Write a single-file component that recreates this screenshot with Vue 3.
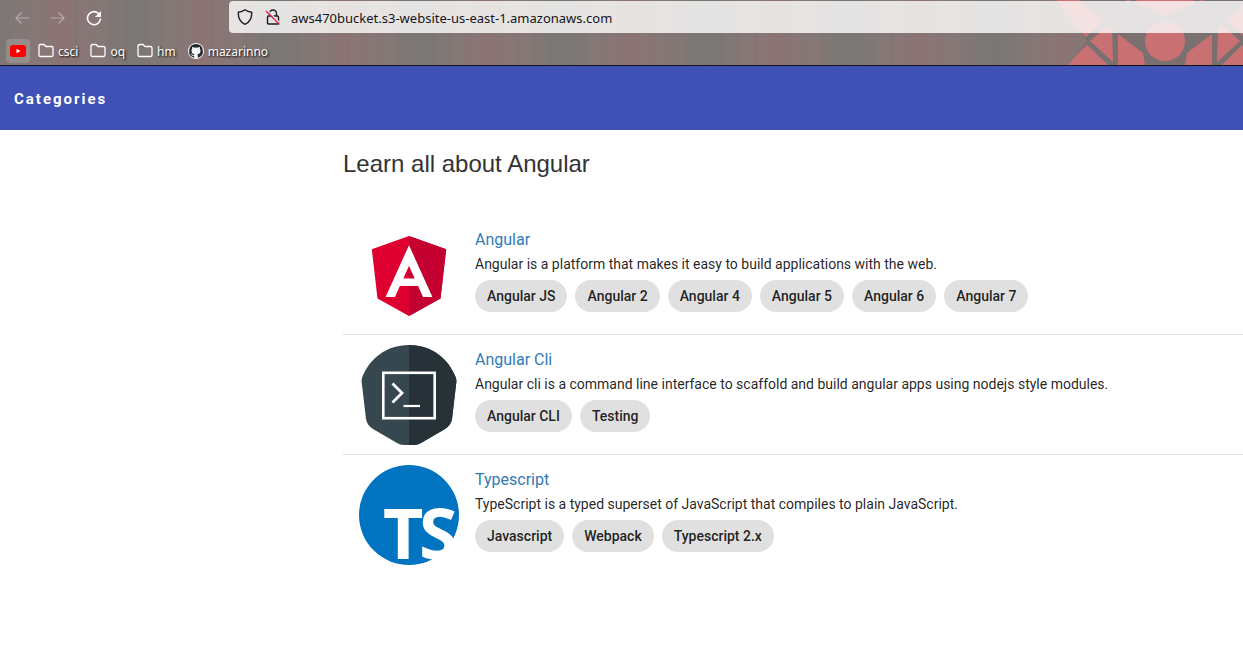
<script setup>
const folders = ['csci', 'oq', 'hm']
const courses = [
  {
    id: 'angular',
    title: 'Angular',
    text: 'Angular is a platform that makes it easy to build applications with the web.',
    tags: ['Angular JS', 'Angular 2', 'Angular 4', 'Angular 5', 'Angular 6', 'Angular 7'],
  },
  {
    id: 'cli',
    title: 'Angular Cli',
    text: 'Angular cli is a command line interface to scaffold and build angular apps using nodejs style modules.',
    tags: ['Angular CLI', 'Testing'],
  },
  {
    id: 'typescript',
    title: 'Typescript',
    text: 'TypeScript is a typed superset of JavaScript that compiles to plain JavaScript.',
    tags: ['Javascript', 'Webpack', 'Typescript 2.x'],
  },
]
</script>

<template>
  <div class="window">
    <header class="chrome">
      <svg class="art" width="213" height="65" viewBox="0 0 213 65" aria-hidden="true">
        <path class="art-shade" d="M27 0H213V65H38L57 41Z" />
        <g class="art-red">
          <path d="M27 0H49L73 21L56 37Q39 20 27 0Z" />
          <path d="M96 0H101L98 2ZM169 0H174L172 2Z" />
          <path d="M106 0H164V4L135 16L108 4Z" />
          <circle cx="135" cy="41" r="20" />
          <path d="M38 65Q48 53 57 45L78 65Z" />
          <path d="M60 41L78 25L82 28L83 62Z" />
          <path d="M88 34L113 53L115 65H88Z" />
          <path d="M182 34L157 53L155 65H182Z" />
          <path d="M210 41L192 25L188 28L187 62Z" />
          <path d="M192 65L212 45L213 46V65Z" />
          <path d="M213 5L197 21L213 36Z" />
        </g>
      </svg>

      <div class="toolbar">
        <nav class="nav-buttons" aria-label="History">
          <button class="nav-button dim" type="button" aria-label="Back">
            <svg width="16" height="16" viewBox="0 0 16 16"><path d="M15 8H2M7.500 2.500L2 8L7.500 13.500" /></svg>
          </button>
          <button class="nav-button dim" type="button" aria-label="Forward">
            <svg width="16" height="16" viewBox="0 0 16 16"><path d="M1 8H14M8.500 2.500L14 8L8.500 13.500" /></svg>
          </button>
          <button class="nav-button" type="button" aria-label="Reload">
            <svg width="16" height="16" viewBox="0 0 16 16">
              <path class="reload-arc" d="M13 4A6.500 6.500 0 1 0 14.500 8.500" />
              <path class="solid" d="M15 1V7H9Z" />
            </svg>
          </button>
        </nav>
        <div class="address">
          <svg width="16" height="16" viewBox="0 0 16 16" aria-hidden="true">
            <path d="M8 0.800C10 2.300 12 3 14.600 3.200C15.200 8.500 12.500 13.500 8 15.300C3.500 13.500 0.800 8.500 1.400 3.200C4 3 6 2.300 8 0.800Z" />
          </svg>
          <svg width="16" height="16" viewBox="0 0 16 16" aria-hidden="true">
            <path d="M4.500 7V4.500A3.500 3.500 0 0 1 11.500 4.500V7M3.500 7H12.500Q13.500 7 13.500 8V14Q13.500 15 12.500 15H3.500Q2.500 15 2.500 14V8Q2.500 7 3.500 7Z" />
            <path class="slash-gap" d="M2 1L15.500 14.500" />
            <path class="slash" d="M1 2L14.500 15.500" />
          </svg>
          <input class="url" type="text" aria-label="Address" value="aws470bucket.s3-website-us-east-1.amazonaws.com" />
        </div>
      </div>

      <nav class="bookmarks" aria-label="Bookmarks">
        <a class="youtube" href="#" aria-label="YouTube">
          <svg width="16" height="12" viewBox="0 0 16 12">
            <rect width="16" height="12" rx="3" fill="#ff0000" />
            <path d="M6.500 3.700L10.500 6L6.500 8.300Z" fill="#fff" />
          </svg>
        </a>
        <a v-for="name in folders" :key="name" class="bookmark" href="#">
          <svg width="16" height="16" viewBox="0 0 16 16" aria-hidden="true">
            <path d="M1 3.500Q1 1.500 2.500 1.500H6L8 3.500H13.500Q15 3.500 15 5V12Q15 13.500 13.500 13.500H2.500Q1 13.500 1 12Z" />
          </svg>
          <span>{{ name }}</span>
        </a>
        <a class="bookmark" href="#">
          <svg class="github" width="16" height="16" viewBox="0 0 16 16" aria-hidden="true">
            <circle cx="8" cy="8" r="8" fill="#f6f6f8" />
            <path d="M8 1.100A7 7 0 0 0 5.800 14.700C6.100 14.800 6.200 14.600 6.200 14.400V13.100C4.300 13.500 3.900 12.200 3.900 12.200C3.500 11.400 3.100 11.200 3.100 11.200C2.500 10.800 3.200 10.800 3.200 10.800C3.900 10.800 4.200 11.500 4.200 11.500C4.900 12.600 5.900 12.300 6.300 12.100C6.300 11.700 6.500 11.300 6.700 11.200C5.200 11 3.500 10.400 3.500 7.700C3.500 6.900 3.800 6.300 4.200 5.800C4.200 5.600 3.900 4.900 4.300 4C4.300 4 4.900 3.800 6.200 4.700A6.700 6.700 0 0 1 9.800 4.700C11.100 3.800 11.700 4 11.700 4C12.100 4.900 11.800 5.600 11.800 5.800C12.200 6.300 12.500 6.900 12.500 7.700C12.500 10.400 10.800 11 9.300 11.200C9.600 11.400 9.800 11.900 9.800 12.400V14.400C9.800 14.600 9.900 14.800 10.200 14.700A7 7 0 0 0 8 1.100Z" fill="#24292e" />
          </svg>
          <span>mazarinno</span>
        </a>
      </nav>
    </header>

    <div class="app-bar"><a href="#">Categories</a></div>

    <main class="content">
      <h1>Learn all about Angular</h1>
      <ul class="courses">
        <li v-for="course in courses" :key="course.id" class="course">
          <svg v-if="course.id === 'angular'" width="100" height="100" viewBox="0 -1 100 100" aria-hidden="true">
            <clipPath id="mark-area"><rect x="20" y="18" width="60" height="53" /></clipPath>
            <path d="M50 10L12.800 23.300L18.500 72.500L50 90L81.500 72.500L87.200 23.300Z" fill="#dd0031" />
            <path d="M50 10V90L81.500 72.500L87.200 23.300Z" fill="#c3002f" />
            <g fill="none" stroke="#fff">
              <path d="M27.200 80L50 29.500L72.800 80" stroke-width="8.500" stroke-miterlimit="8" clip-path="url(#mark-area)" />
              <path d="M39 56.200H61" stroke-width="7.500" />
            </g>
          </svg>
          <svg v-else-if="course.id === 'cli'" width="100" height="100" viewBox="0 0 100 100" aria-hidden="true">
            <path d="M50 0C27 0 10 14 3 33Q2 36 3 40L7 74Q8 80 14 84L38 98Q41 100 45 100H55Q59 100 62 98L86 84Q92 80 93 74L97 40Q98 36 97 33C90 14 73 0 50 0Z" fill="#37474f" />
            <path d="M50 0V100H55Q59 100 62 98L86 84Q92 80 93 74L97 40Q98 36 97 33C90 14 73 0 50 0Z" fill="#263238" />
            <g fill="none" stroke="#fff">
              <rect x="24.300" y="27.800" width="51.400" height="45.400" stroke-width="2.600" />
              <path d="M33.500 38.500L43 48L33.500 57.500" stroke-width="2.800" />
              <path d="M44.500 61H61" stroke-width="2.200" />
            </g>
          </svg>
          <svg v-else width="100" height="100" viewBox="0 0 100 100" role="img" aria-label="TypeScript logo">
            <circle cx="50" cy="50" r="50" fill="#0074c1" />
            <g class="ts-mark">
              <text x="24" y="94">T</text>
              <text x="60" y="94">S</text>
            </g>
          </svg>

          <div class="details">
            <h2><a href="#">{{ course.title }}</a></h2>
            <p>{{ course.text }}</p>
            <div class="tags">
              <span v-for="tag in course.tags" :key="tag" class="tag">{{ tag }}</span>
            </div>
          </div>
        </li>
      </ul>
    </main>
  </div>
</template>

<style>
body {
  margin: 0;
  background: #fff;
}
</style>

<style scoped>
.window {
  font-family: Roboto, "Liberation Sans", sans-serif;
  color: rgba(0, 0, 0, 0.87);
}

a {
  text-decoration: none;
}

/* Browser chrome */
.chrome {
  position: relative;
  overflow: hidden;
  border-bottom: 1px solid #141418;
  font-family: "Noto Sans", "Open Sans", sans-serif;
  background:
    repeating-linear-gradient(90deg, rgba(160, 110, 110, 0.08) 0 1px, transparent 2px 6px, rgba(90, 90, 85, 0.06) 8px, transparent 10px 17px),
    repeating-linear-gradient(90deg, #7b7774 0, #857876 26px, #897676 46px, #8d7373 60px, #897676 74px, #857876 100px, #7b7774 125px, #7b7774 143px);
}

.art {
  position: absolute;
  top: 0;
  right: 0;
}

.art-shade {
  fill: #7b7070;
}

.art-red {
  fill: #c97072;
}

.toolbar {
  position: relative;
  display: flex;
  align-items: center;
  padding-top: 1px;
}

.nav-buttons {
  flex: 0 0 229px;
  display: flex;
  gap: 20px;
  padding: 2px 0 0 14px;
  box-sizing: border-box;
}

.nav-button {
  display: block;
  width: 16px;
  height: 16px;
  padding: 0;
  border: 0;
  background: none;
  stroke: #fff;
  fill: none;
}

.nav-button svg {
  display: block;
  stroke-width: 1.2;
}

.dim {
  opacity: 0.4;
}

.nav-button .reload-arc {
  stroke-width: 1.6;
}

.solid {
  fill: #fff;
  stroke: none;
}

.address {
  flex: 1;
  display: flex;
  align-items: center;
  gap: 12px;
  height: 32px;
  padding-left: 8px;
  border-radius: 4px 0 0 4px;
  background: rgba(255, 255, 255, 0.8);
}

.address svg {
  flex: none;
  fill: none;
  stroke: #1c1b22;
  stroke-width: 1.4;
}

.address .slash-gap {
  stroke: #e6e4e4;
}

.address .slash {
  stroke: #e22850;
}

.url {
  flex: 1;
  min-width: 0;
  margin-left: -2px;
  padding: 2px 0 0;
  border: 0;
  outline: 0;
  background: none;
  color: #15141a;
  font: 13px/20px "Noto Sans", "Open Sans", sans-serif;
}

.bookmarks {
  position: relative;
  display: flex;
  align-items: center;
  gap: 12px;
  padding: 6px 6px 2px;
}

.youtube {
  display: flex;
  align-items: center;
  justify-content: center;
  width: 24px;
  height: 24px;
  margin-right: -4px;
  border-radius: 4px;
  background: rgba(255, 255, 255, 0.16);
}

.bookmark {
  display: flex;
  align-items: center;
  gap: 4px;
  color: #fff;
  font-size: 12px;
  line-height: 16px;
  text-shadow: 1px 1px 2px #000;
}

.bookmark span {
  padding-top: 2px;
}

.bookmark svg {
  fill: none;
  stroke: #fff;
  stroke-width: 1.3;
}

.bookmark .github {
  stroke: none;
}

/* Page */
.app-bar {
  display: flex;
  align-items: center;
  min-height: 64px;
  padding: 2px 14px 0;
  box-sizing: border-box;
  background: #3f51b5;
}

.app-bar a {
  color: #fff;
  font-size: 15px;
  line-height: 20px;
  font-weight: 700;
  letter-spacing: 2px;
}

.content {
  padding: 20px 0 0 343px;
}

h1 {
  margin: 0;
  color: #333;
  font: 400 24px/28px "Liberation Sans", Arial, sans-serif;
}

.courses {
  list-style: none;
  margin: 0;
  padding: 37px 0 0;
}

.course {
  display: flex;
  gap: 16px;
  padding: 10px 16px 9px;
}

.course + .course {
  border-top: 1px solid #e0e0e0;
}

.course > svg {
  flex: none;
}

.ts-mark {
  fill: #fff;
  font: 700 70px "Noto Sans", "Open Sans", sans-serif;
}

.details {
  padding-top: 3px;
}

h2 {
  margin: 0;
  font-size: 16px;
  line-height: 24px;
  font-weight: 400;
}

h2 a {
  color: #337ab7;
}

p {
  margin: 2px 0 6px;
  font-size: 14px;
  line-height: 20px;
}

.tags {
  display: flex;
  flex-wrap: wrap;
  gap: 8px;
}

.tag {
  padding: 6px 12px;
  border-radius: 16px;
  background: #e0e0e0;
  font-size: 14px;
  line-height: 20px;
  font-weight: 500;
}
</style>
